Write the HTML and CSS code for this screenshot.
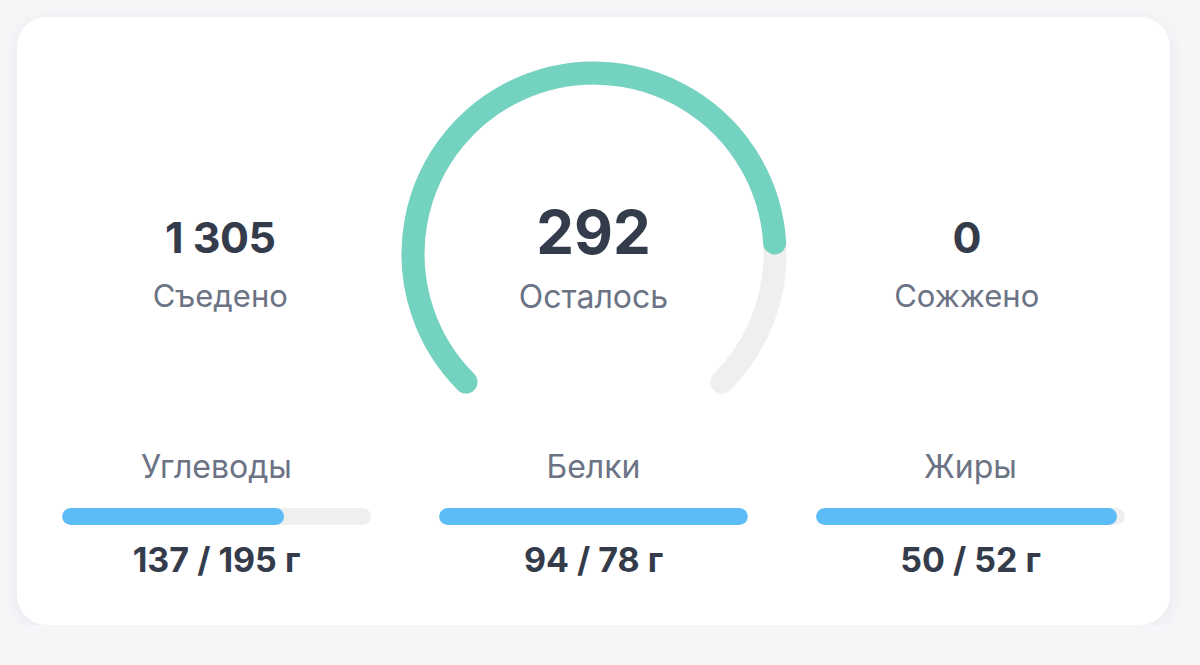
FILE: index.html
```html
<!DOCTYPE html>
<html lang="ru">
<head>
    <meta charset="UTF-8">
    <meta name="viewport" content="width=device-width, initial-scale=1.0">
    <title>Калории</title>
    <link rel="stylesheet" href="styles.css">
</head>
<body>
    <div class="card">
        <div class="summary">
            <div class="stat">
                <div class="stat-value">1&nbsp;305</div>
                <div class="stat-label">Съедено</div>
            </div>

            <div class="gauge">
                <!-- 270° arc, eaten part in green -->
                <svg class="gauge-ring" width="386" height="336" viewBox="0 0 386 336">
                    <path class="gauge-track" d="M 65.0 321.0 A 181 181 0 1 1 321.0 321.0" />
                    <path class="gauge-fill" d="M 65.0 321.0 A 181 181 0 1 1 373.7 182.0" />
                </svg>
                <div class="gauge-center">
                    <div class="gauge-value">292</div>
                    <div class="stat-label">Осталось</div>
                </div>
            </div>

            <div class="stat">
                <div class="stat-value">0</div>
                <div class="stat-label">Сожжено</div>
            </div>
        </div>

        <div class="macros">
            <div class="macro">
                <div class="macro-name">Углеводы</div>
                <div class="bar"><div class="bar-fill" style="width: 72%"></div></div>
                <div class="macro-value">137 / 195 г</div>
            </div>
            <div class="macro">
                <div class="macro-name">Белки</div>
                <div class="bar"><div class="bar-fill" style="width: 100%"></div></div>
                <div class="macro-value">94 / 78 г</div>
            </div>
            <div class="macro">
                <div class="macro-name">Жиры</div>
                <div class="bar"><div class="bar-fill" style="width: 97.5%"></div></div>
                <div class="macro-value">50 / 52 г</div>
            </div>
        </div>
    </div>
</body>
</html>
```

FILE: styles.css
```css
body {
    font-family: 'Inter', 'Noto Sans', sans-serif;
    margin: 0;
    padding: 17px 30px 0 17px;
    background: #f5f6f8;
    color: #343c4c;
}

.card {
    background: #fff;
    border-radius: 30px;
    box-shadow: 0 4px 18px rgba(30, 40, 60, 0.06);
    padding: 44px 45px 45px 45px;
    width: 1063px;
}

.summary {
    display: grid;
    grid-template-columns: 1fr 386px 1fr;
    align-items: start;
    margin: 0 -22px;
}

.stat {
    padding-top: 150px;
    text-align: center;
}

.stat-value {
    font-size: 43px;
    font-weight: 700;
    line-height: 52px;
    letter-spacing: -0.5px;
}

.stat-label {
    font-size: 31px;
    line-height: 36px;
    color: #6b7384;
    margin-top: 15px;
}

.gauge {
    position: relative;
    width: 386px;
    height: 336px;
}

.gauge-ring {
    display: block;
}

.gauge-track,
.gauge-fill {
    fill: none;
    stroke-width: 23;
    stroke-linecap: round;
}

.gauge-track {
    stroke: #efefef;
}

.gauge-fill {
    stroke: #74d3c0;
}

.gauge-center {
    position: absolute;
    top: 136px;
    left: 0;
    right: 0;
    text-align: center;
}

.gauge-value {
    font-size: 60px;
    font-weight: 700;
    line-height: 70px;
}

.gauge-center .stat-label {
    font-size: 32px;
    margin-top: 12px;
}

.macros {
    display: grid;
    grid-template-columns: repeat(3, 1fr);
    gap: 68px;
    margin-top: 52px;
}

.macro {
    text-align: center;
}

.macro-name {
    font-size: 32px;
    line-height: 36px;
    color: #6b7384;
}

.bar {
    height: 17px;
    margin-top: 23px;
    border-radius: 9px;
    background: #efefef;
    overflow: hidden;
}

.bar-fill {
    height: 100%;
    border-radius: 9px;
    background: #5bbcf6;
}

.macro-value {
    font-size: 34px;
    font-weight: 700;
    line-height: 40px;
    margin-top: 15px;
}
```
